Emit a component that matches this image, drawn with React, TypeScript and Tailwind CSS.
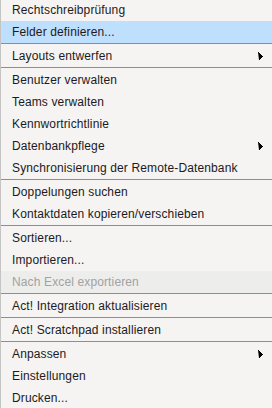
type Item =
  | { sep: true }
  | { sep?: false; label: string; sub?: boolean; active?: boolean; disabled?: boolean; first?: boolean }

const items: Item[] = [
  { label: 'Rechtschreibprüfung', first: true },
  { label: 'Felder definieren...', active: true },
  { sep: true },
  { label: 'Layouts entwerfen', sub: true },
  { sep: true },
  { label: 'Benutzer verwalten' },
  { label: 'Teams verwalten' },
  { label: 'Kennwortrichtlinie' },
  { label: 'Datenbankpflege', sub: true },
  { label: 'Synchronisierung der Remote-Datenbank' },
  { sep: true },
  { label: 'Doppelungen suchen' },
  { label: 'Kontaktdaten kopieren/verschieben' },
  { sep: true },
  { label: 'Sortieren...' },
  { label: 'Importieren...' },
  { label: 'Nach Excel exportieren', disabled: true },
  { sep: true },
  { label: 'Act! Integration aktualisieren' },
  { sep: true },
  { label: 'Act! Scratchpad installieren' },
  { sep: true },
  { label: 'Anpassen', sub: true },
  { label: 'Einstellungen' },
  { label: 'Drucken...' },
]

function Arrow() {
  return (
    <svg width="5" height="8" viewBox="0 0 5 8" className="shrink-0">
      <path d="M0 0h1v1h1v1h1v1h1v1h1v1h-1v1h-1v1h-1v1h-1z" fill="#000" />
    </svg>
  )
}

export default function App() {
  return (
    <div
      className="w-[272px] h-[408px] overflow-hidden bg-[#f5f4f2] border-l border-[#c4c4c4] text-[12px] tracking-[0.13px] text-[#1c1a22]"
      style={{ fontFamily: '"Liberation Sans", Arial, sans-serif' }}
    >
      {items.map((it, i) =>
        it.sep ? (
          <div key={i} className="h-[2px] border-t border-[#8e8e8e]" />
        ) : (
          <div
            key={i}
            className={
              'flex items-center justify-between pl-[11px] pr-[9px] ' +
              (it.first ? 'h-[21px] pb-px ' : 'h-[22px] ') +
              (it.active ? 'bg-[#bfdfff] ' : '') +
              (it.disabled ? 'bg-[#ededec] text-[#a2a2a2] ' : '')
            }
          >
            <span className="leading-none">{it.label}</span>
            {it.sub && <Arrow />}
          </div>
        )
      )}
    </div>
  )
}
